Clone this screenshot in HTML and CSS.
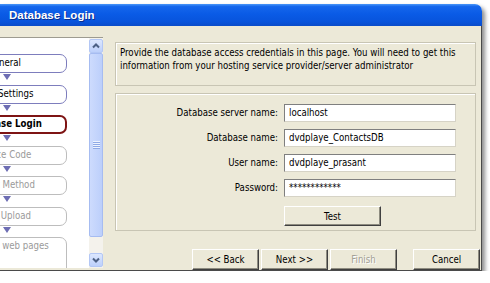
FILE: index.html
```html
<!DOCTYPE html>
<html>
<head>
  <title>Database Login</title>
  <link rel="stylesheet" href="styles.css">
</head>
<body>
  <div class="window">
    <div class="titlebar">Database Login</div>
    <div class="client">

      <div class="steps">
        <div class="step-list">
          <div class="step done">General</div>
          <div class="arrow"></div>
          <div class="step done">Page Settings</div>
          <div class="arrow"></div>
          <div class="step current">Database Login</div>
          <div class="arrow"></div>
          <div class="step">Source Code</div>
          <div class="arrow"></div>
          <div class="step">Select Method</div>
          <div class="arrow"></div>
          <div class="step">Start Upload</div>
          <div class="arrow"></div>
          <div class="step last">Generate web pages</div>
        </div>
        <div class="scrollbar">
          <div class="sb-btn">
            <svg width="12" height="12" viewBox="0 0 12 12"><polyline points="3,7.5 6,4.5 9,7.5" fill="none" stroke="#4d6185" stroke-width="2"/></svg>
          </div>
          <div class="sb-thumb"><span class="grip"></span></div>
          <div class="sb-track"></div>
          <div class="sb-btn">
            <svg width="12" height="12" viewBox="0 0 12 12"><polyline points="3,4.5 6,7.5 9,4.5" fill="none" stroke="#4d6185" stroke-width="2"/></svg>
          </div>
        </div>
      </div>

      <div class="main">
        <div class="panel intro">
          Provide the database access credentials in this page. You will need to get this information from your hosting service provider/server administrator
        </div>

        <div class="panel form">
          <label>Database server name:</label>
          <div class="field">localhost</div>
          <label>Database name:</label>
          <div class="field">dvdplaye_ContactsDB</div>
          <label>User name:</label>
          <div class="field">dvdplaye_prasant</div>
          <label>Password:</label>
          <div class="field">************</div>
          <button class="btn test">Test</button>
        </div>

        <div class="buttons">
          <button class="btn">&lt;&lt; Back</button>
          <button class="btn">Next &gt;&gt;</button>
          <button class="btn disabled">Finish</button>
          <button class="btn cancel">Cancel</button>
        </div>
      </div>

    </div>
  </div>
</body>
</html>
```

FILE: styles.css
```css
body {
  margin: 0;
  background: #fff;
  font-family: "DejaVu Sans Condensed", "DejaVu Sans", sans-serif;
  font-stretch: condensed;
  font-size: 9.6px;
  color: #000;
}
.window {
  width: 482px;
  margin-top: 4px;
  border-top-right-radius: 7px;
  box-shadow: 3px 3px 4px rgba(0,0,0,0.45);
}
.titlebar {
  height: 22px;
  padding-left: 9px;
  line-height: 22px;
  color: #fff;
  font-family: "Liberation Sans", sans-serif;
  font-stretch: normal;
  font-weight: bold;
  font-size: 11.5px;
  text-shadow: 1px 1px 0 #0b2f8f;
  border-top-right-radius: 7px;
  background: linear-gradient(to bottom, #4a97f8 0%, #1566ec 12%, #0a5be6 45%, #0854dc 80%, #0a4cc9 100%);
}
.client {
  display: flex;
  height: 244px;
  background: #ece9d8;
  border-right: 1px solid #4a4a4a;
  border-bottom: 1px solid #4a4a4a;
}

/* steps column */
.steps {
  display: flex;
  width: 103px;
  height: 231px;
  margin-top: 11px;
  box-sizing: border-box;
  border-top: 1px solid #9d9b90;
}
.step-list {
  width: 89px;
  padding-top: 16px;
  background: #fff;
  overflow: hidden;
}
.step {
  width: 126px;
  height: 19px;
  margin-left: -59px;
  box-sizing: border-box;
  border: 1px solid #bdbdbd;
  border-radius: 7px;
  text-align: center;
  line-height: 16px;
  color: #9a9a9a;
  white-space: nowrap;
}
.step.done {
  border-color: #7d7dbd;
  color: #000;
}
.step.current {
  border: 2px solid #7e1414;
  line-height: 14px;
  font-weight: bold;
  color: #000;
}
.step.last {
  height: 40px;
}
.arrow {
  width: 0;
  height: 0;
  margin: 1px 0 4.5px 3px;
  border-left: 4px solid transparent;
  border-right: 4px solid transparent;
  border-top: 6px solid #6d6db3;
}
.scrollbar {
  width: 14px;
  padding: 1px 0;
  display: flex;
  flex-direction: column;
  background: #f4f2ec;
}
.sb-btn {
  height: 14px;
  box-sizing: border-box;
  display: flex;
  align-items: center;
  justify-content: center;
  border: 1px solid #b3c7f5;
  border-radius: 2px;
  background: linear-gradient(to bottom, #dce7fe, #bdd0fb);
}
.sb-thumb {
  height: 184px;
  box-sizing: border-box;
  display: flex;
  align-items: center;
  justify-content: center;
  border: 1px solid #a6bcf1;
  border-radius: 2px;
  background: linear-gradient(to right, #cddbfd, #bccffb);
}
.grip {
  width: 7px;
  height: 8px;
  background: repeating-linear-gradient(to bottom, #eef3fe 0 1px, #8ea9e6 1px 2px);
}
.sb-track {
  flex: 1;
}

/* right side */
.main {
  flex: 1;
  margin-left: 12px;
  padding-right: 1px;
  display: flex;
  flex-direction: column;
}
.panel {
  margin-right: 4px;
  box-sizing: border-box;
  border: 1px solid #c8c5b4;
  box-shadow: inset 1px 1px 0 #fff;
}
.intro {
  height: 44px;
  margin-top: 16px;
  padding: 3px 4px;
  line-height: 13px;
}
.form {
  height: 138px;
  margin-top: 7px;
  padding: 10px 19px 0 0;
  display: grid;
  grid-template-columns: 1fr 172px;
  column-gap: 6px;
  row-gap: 7px;
  align-content: start;
}
.form label {
  text-align: right;
  line-height: 18px;
}
.field {
  height: 18px;
  padding: 0 4px;
  box-sizing: border-box;
  border: 1px solid;
  border-color: #7f7f7f #d6d3c6 #d6d3c6 #7f7f7f;
  background: #fff;
  line-height: 16px;
  white-space: nowrap;
}
.btn {
  width: 67px;
  height: 21px;
  padding: 0;
  box-sizing: border-box;
  background: #ece9d8;
  border: 1px solid;
  border-color: #fff #404040 #404040 #fff;
  box-shadow: inset -1px -1px 0 #8e8c80;
  font: inherit;
  color: #000;
}
.btn.test {
  grid-column: 2;
  width: 97px;
  height: 20px;
  margin-top: 2px;
}
.btn.disabled {
  color: #a3a196;
  text-shadow: 1px 1px 0 #fff;
}
.buttons {
  margin-top: auto;
  display: flex;
  justify-content: flex-end;
  gap: 2px;
}
.btn.cancel {
  margin-left: 14px;
}
```
